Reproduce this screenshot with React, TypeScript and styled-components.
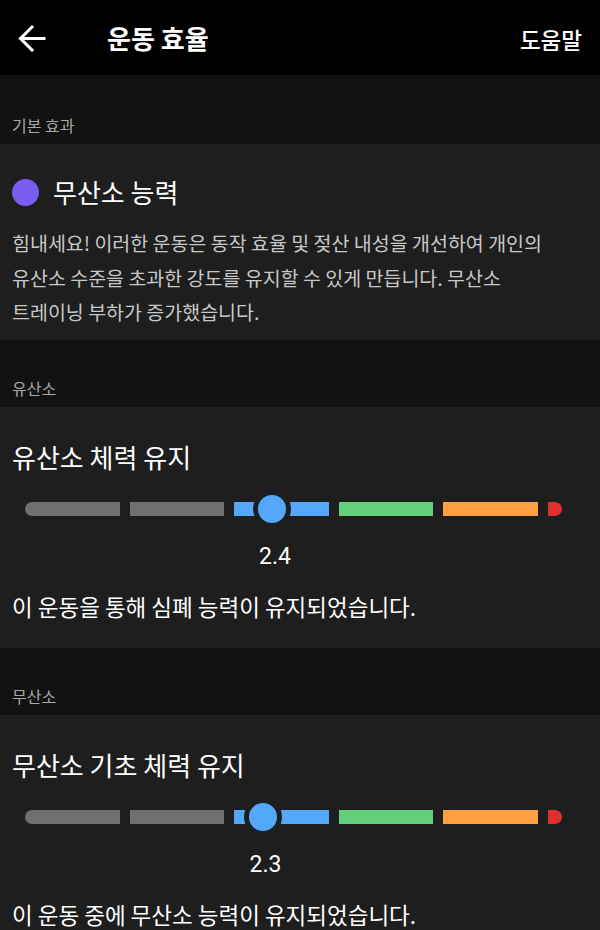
import { createGlobalStyle, styled } from "styled-components";

const GlobalStyle = createGlobalStyle`
    html, body {
        margin: 0;
        padding: 0;
        background: #1e1e1e;
    }
    body {
        font-family: Roboto, "Noto Sans CJK KR", sans-serif;
        color: #fff;
    }
    `;

const Screen = styled.div`
    width: 600px;
    min-height: 930px;
    display: flex;
    flex-direction: column;
    background: #1e1e1e;
    overflow: hidden;
    `;

const Header = styled.header`
    height: 75px;
    display: flex;
    align-items: center;
    padding: 0 18px;
    background: #000;
    box-sizing: border-box;
    `;

const BackButton = styled.button`
    width: 28px;
    height: 28px;
    padding: 0;
    border: none;
    background: none;
    display: flex;
    align-items: center;
    justify-content: center;
    `;

const Title = styled.h1`
    margin: 0 0 0 61px;
    flex: 1;
    font-family: "Noto Sans CJK KR", sans-serif;
    font-size: 26px;
    font-weight: 700;
    color: #fff;
    `;

const HelpLink = styled.span`
    font-family: "Noto Sans CJK KR", sans-serif;
    font-size: 22.5px;
    font-weight: 500;
    color: #fff;
    margin-top: 2px;
    `;

const SectionLabel = styled.div<{ $height: number }>`
    height: ${(p) => p.$height}px;
    display: flex;
    align-items: flex-end;
    padding: 0 12px 9px;
    box-sizing: border-box;
    background: #121212;
    font-family: "Noto Sans CJK KR", sans-serif;
    font-size: 16px;
    line-height: 20px;
    color: #a8a8a8;
    `;

const Card = styled.section<{ $pad: string }>`
    background: #1e1e1e;
    padding: ${(p) => p.$pad};
    display: flex;
    flex-direction: column;
    `;

const EffectRow = styled.div`
    display: flex;
    align-items: center;
    gap: 14px;
    height: 34px;
    `;

const Dot = styled.span`
    width: 27px;
    height: 27px;
    border-radius: 50%;
    background: #7b5cf0;
    `;

const CardTitle = styled.h2`
    margin: 0;
    font-family: "Noto Sans CJK KR", sans-serif;
    font-size: 26px;
    line-height: 34px;
    font-weight: 400;
    color: #fff;
    `;

const Body = styled.p`
    margin: 17px 0 0;
    padding-right: 40px;
    font-family: "Noto Sans CJK KR", sans-serif;
    font-size: 19.5px;
    line-height: 34.5px;
    color: #c8c8c8;
    word-break: keep-all;
    `;

const Track = styled.div`
    position: relative;
    margin: 21px 26px 0 13px;
    height: 28px;
    display: grid;
    grid-template-columns: repeat(5, 1fr) 14px;
    column-gap: 10px;
    align-items: center;
    `;

const Segment = styled.span<{ $color: string; $round?: "left" | "right" }>`
    height: 14px;
    background: ${(p) => p.$color};
    border-radius: ${(p) =>
        p.$round === "left" ? "7px 0 0 7px" : p.$round === "right" ? "0 7px 7px 0" : "0"};
    `;

const Knob = styled.span`
    position: absolute;
    top: -5px;
    width: 28px;
    height: 28px;
    margin-left: -19px;
    border-radius: 50%;
    background: #54a8fb;
    border: 5px solid #1e1e1e;
    `;

const ValueRow = styled.div`
    position: relative;
    height: 28px;
    margin-top: 20px;
    `;

const Value = styled.span`
    position: absolute;
    top: 0;
    transform: translateX(-50%);
    font-family: Roboto, sans-serif;
    font-size: 23px;
    line-height: 28px;
    color: #fff;
    `;

const Summary = styled.p`
    margin: 20px 0 0;
    font-family: "Noto Sans CJK KR", sans-serif;
    font-size: 22.5px;
    line-height: 30px;
    color: #fff;
    `;

const segments = [
    { color: "#707070", round: "left" as const },
    { color: "#707070" },
    { color: "#54a8fb" },
    { color: "#62d07a" },
    { color: "#ff9f40" },
    { color: "#e0302e", round: "right" as const },
];

// segment pitch = width + gap on a 537px track
const PITCH = 104.6;
const SEG_W = 94.6;

const knobX = (v: number) => Math.floor(v) * PITCH + (v - Math.floor(v)) * SEG_W;

const ScoreBar = ({ value }: { value: number }) => {
    const x = knobX(value);
    return (
        <>
            <Track>
                {segments.map((s, i) => (
                    <Segment key={i} $color={s.color} $round={s.round} />
                ))}
                <Knob style={{ left: x }} />
            </Track>
            <ValueRow>
                <Value style={{ left: 13 + x + 3 }}>{value.toFixed(1)}</Value>
            </ValueRow>
        </>
    );
};

const BackArrow = () => (
    <svg width="28" height="28" viewBox="0 0 28 28" fill="none" stroke="#fff" strokeWidth="3" strokeLinecap="square">
        <path d="M3 14.5 H26" />
        <path d="M14 3 L2.5 14.5 L14 26" />
    </svg>
);

const App = () => {
    return (
        <Screen>
            <GlobalStyle />
            <Header>
                <BackButton>
                    <BackArrow />
                </BackButton>
                <Title>운동 효율</Title>
                <HelpLink>도움말</HelpLink>
            </Header>

            <SectionLabel $height={69}>기본 효과</SectionLabel>
            <Card $pad="31px 12px 10px">
                <EffectRow>
                    <Dot />
                    <CardTitle>무산소 능력</CardTitle>
                </EffectRow>
                <Body>
                    힘내세요! 이러한 운동은 동작 효율 및 젖산 내성을 개선하여 개인의 유산소 수준을 초과한 강도를 유지할 수 있게 만듭니다. 무산소 트레이닝 부하가 증가했습니다.
                </Body>
            </Card>

            <SectionLabel $height={67}>유산소</SectionLabel>
            <Card $pad="33px 12px 27px">
                <CardTitle>유산소 체력 유지</CardTitle>
                <ScoreBar value={2.4} />
                <Summary>이 운동을 통해 심폐 능력이 유지되었습니다.</Summary>
            </Card>

            <SectionLabel $height={67}>무산소</SectionLabel>
            <Card $pad="33px 12px 27px">
                <CardTitle>무산소 기초 체력 유지</CardTitle>
                <ScoreBar value={2.3} />
                <Summary>이 운동 중에 무산소 능력이 유지되었습니다.</Summary>
            </Card>
        </Screen>
    );
};

export default App;
